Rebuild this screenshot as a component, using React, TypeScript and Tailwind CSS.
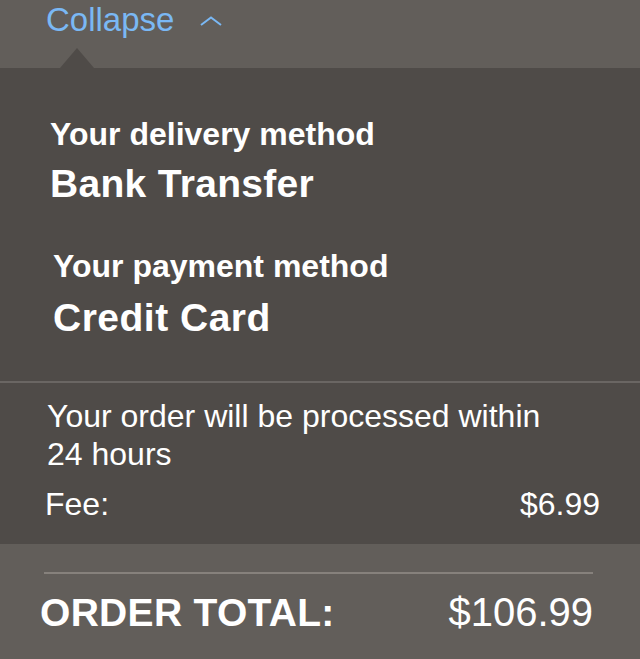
export default function App() {
  return (
    <div className="w-[640px] h-[659px] overflow-hidden bg-[#625e5a] font-['Liberation_Sans',Arial,sans-serif] text-white">
      {/* collapse toggle */}
      <div className="relative h-[68px]">
        <button className="flex items-start pl-[46px] pt-[1px] text-[33px] leading-[37px] text-[#7ab8f4]">
          <span>Collapse</span>
          <svg width="24" height="12" viewBox="0 0 24 12" className="ml-[26px] mt-[15px]">
            <path d="M1 9 L11 1.5 L21 9" fill="none" stroke="#7ab8f4" strokeWidth="2" />
          </svg>
        </button>
        <div className="absolute bottom-0 left-[60px] w-0 h-0 border-l-[17.5px] border-r-[17.5px] border-b-[20px] border-l-transparent border-r-transparent border-b-[#4f4b48]" />
      </div>

      {/* details panel */}
      <div className="bg-[#4f4b48]">
        <div className="pt-[48px] pb-[41px]">
          <div className="pl-[50px]">
            <p className="text-[32px] leading-[36px] font-bold">Your delivery method</p>
            <p className="mt-[10px] text-[39px] leading-[44px] font-bold tracking-[0.3px]">Bank Transfer</p>
          </div>
          <div className="pl-[53px] mt-[42px]">
            <p className="text-[32px] leading-[36px] font-bold">Your payment method</p>
            <p className="mt-[12px] text-[39px] leading-[44px] font-bold tracking-[0.5px]">Credit Card</p>
          </div>
        </div>
        <div className="h-[2px] bg-[#6a6663]" />
        <div className="pl-[47px] pr-[40px] pt-[14px] pb-[21px] text-[32px] leading-[38px]">
          <p>
            Your order will be processed within
            <br />
            24 hours
          </p>
          <div className="mt-[12px] flex items-baseline justify-between -ml-[2px]">
            <span>Fee:</span>
            <span>$6.99</span>
          </div>
        </div>
      </div>

      {/* total */}
      <div className="px-[44px] pt-[28px]">
        <div className="h-[2px] bg-[#86817c] mr-[3px]" />
        <div className="mt-[15px] flex items-baseline justify-between -ml-[4px]">
          <span className="text-[39px] leading-[46px] font-bold tracking-[0.3px]">ORDER TOTAL:</span>
          <span className="text-[40px] leading-[46px] mr-[3px]">$106.99</span>
        </div>
      </div>
    </div>
  );
}
